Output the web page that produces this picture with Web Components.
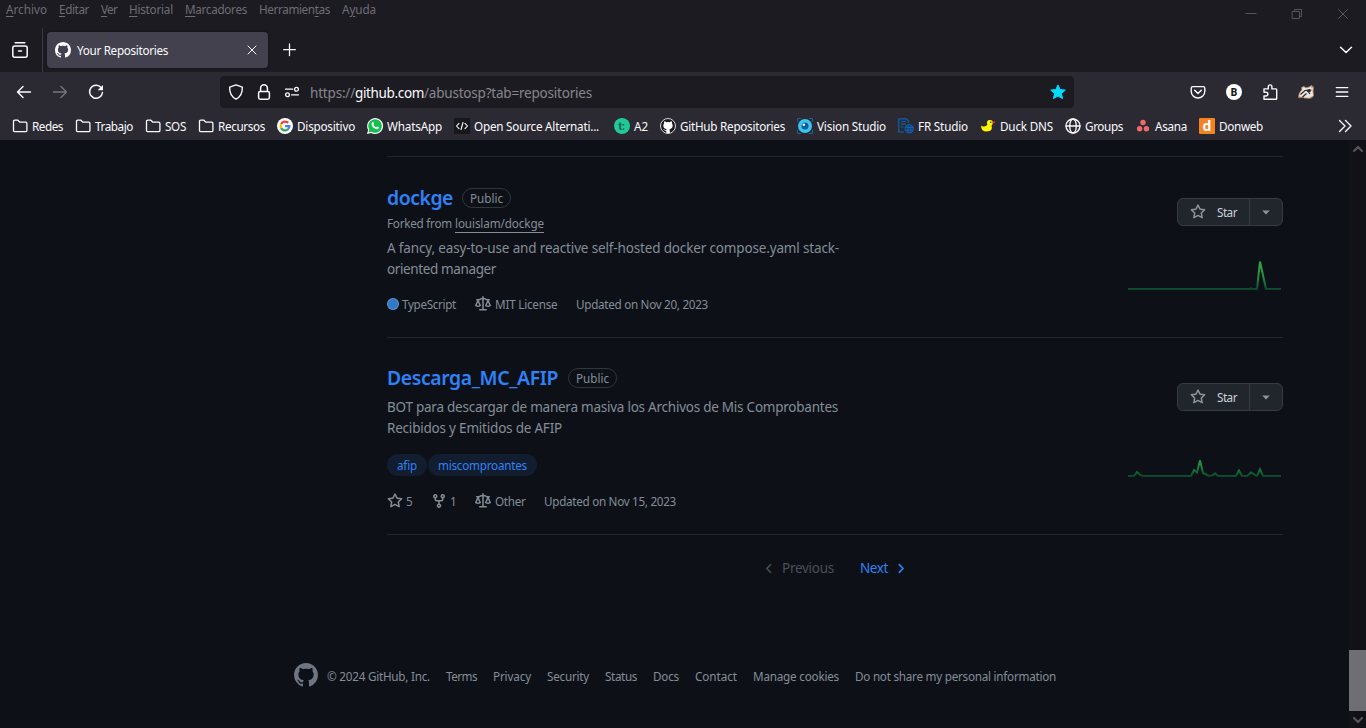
<!DOCTYPE html>
<html lang="es">
<head>
<meta charset="utf-8">
<title>Your Repositories</title>
<style>
html,body{margin:0;height:100%;overflow:hidden;background:#0d1117}
body{font-family:"Noto Sans","Open Sans",sans-serif;font-size:11.7px}
</style>
</head>
<body>
<browser-window></browser-window>
<script>
const ICONS={
 star:'<path fill="currentColor" d="M8 .25a.75.75 0 0 1 .673.418l1.882 3.815 4.21.612a.75.75 0 0 1 .416 1.279l-3.046 2.97.719 4.192a.751.751 0 0 1-1.088.791L8 12.347l-3.766 1.98a.75.75 0 0 1-1.088-.79l.72-4.194L.818 6.374a.75.75 0 0 1 .416-1.28l4.21-.611L7.327.668A.75.75 0 0 1 8 .25Zm0 2.445L6.615 5.5a.75.75 0 0 1-.564.41l-3.097.45 2.24 2.184a.75.75 0 0 1 .216.664l-.528 3.084 2.769-1.456a.75.75 0 0 1 .698 0l2.77 1.456-.53-3.084a.75.75 0 0 1 .216-.664l2.24-2.183-3.096-.45a.75.75 0 0 1-.564-.41L8 2.694Z"/>',
 law:'<path fill="currentColor" d="M8.75.75V2h.985c.304 0 .603.08.867.231l1.29.736c.038.022.08.033.124.033h2.234a.75.75 0 0 1 0 1.5h-.427l2.111 4.692a.75.75 0 0 1-.154.838l-.077.069c-.21.176-.441.327-.686.45C14.556 10.78 13.88 11 13 11a4.498 4.498 0 0 1-2.023-.454 3.544 3.544 0 0 1-.686-.45l-.071-.066a.75.75 0 0 1-.154-.838L12.178 4.5h-.162c-.305 0-.604-.079-.868-.231l-1.29-.736a.245.245 0 0 0-.124-.033H8.75V13h2.5a.75.75 0 0 1 0 1.5h-6.5a.75.75 0 0 1 0-1.5h2.5V3.5h-.984a.245.245 0 0 0-.124.033l-1.289.737c-.265.15-.564.23-.869.23h-.162l2.112 4.692a.75.75 0 0 1-.154.838l-.077.069c-.21.176-.441.327-.686.45C4.556 10.78 3.88 11 3 11a4.498 4.498 0 0 1-2.023-.454 3.544 3.544 0 0 1-.686-.45l-.071-.066a.75.75 0 0 1-.154-.838L2.178 4.5H1.75a.75.75 0 0 1 0-1.5h2.234a.249.249 0 0 0 .125-.033l1.288-.737c.265-.15.564-.23.869-.23h.984V.75a.75.75 0 0 1 1.5 0Zm2.945 8.477c.285.135.718.273 1.305.273s1.02-.138 1.305-.273L13 6.327Zm-10 0c.285.135.718.273 1.305.273s1.02-.138 1.305-.273L3 6.327Z"/>',
 fork:'<path fill="currentColor" d="M5 5.372v.878c0 .414.336.75.75.75h4.5a.75.75 0 0 0 .75-.75v-.878a2.25 2.25 0 1 1 1.5 0v.878a2.25 2.25 0 0 1-2.25 2.25h-1.5v2.128a2.251 2.251 0 1 1-1.5 0V8.5h-1.5A2.25 2.25 0 0 1 3.5 6.25v-.878a2.25 2.25 0 1 1 1.5 0ZM5 3.25a.75.75 0 1 0-1.5 0 .75.75 0 0 0 1.5 0Zm6.75.75a.75.75 0 1 0 0-1.5.75.75 0 0 0 0 1.5Zm-3 8.75a.75.75 0 1 0-1.5 0 .75.75 0 0 0 1.5 0Z"/>',
 mark:'<path fill="currentColor" d="M8 0c4.42 0 8 3.58 8 8a8.013 8.013 0 0 1-5.45 7.59c-.4.08-.55-.17-.55-.38 0-.27.01-1.13.01-2.2 0-.75-.25-1.23-.54-1.48 1.78-.2 3.65-.88 3.65-3.95 0-.88-.31-1.59-.82-2.15.08-.2.36-1.02-.08-2.12 0 0-.67-.22-2.2.82-.64-.18-1.32-.27-2-.27-.68 0-1.36.09-2 .27-1.53-1.03-2.2-.82-2.2-.82-.44 1.1-.16 1.92-.08 2.12-.51.56-.82 1.28-.82 2.15 0 3.06 1.86 3.75 3.64 3.95-.23.2-.44.55-.51 1.07-.46.21-1.61.55-2.33-.66-.15-.24-.6-.83-1.23-.82-.67.01-.27.38.01.53.34.19.73.9.82 1.13.16.45.68 1.31 2.69.94 0 .67.01 1.3.01 1.49 0 .21-.15.45-.55.38A7.995 7.995 0 0 1 0 8c0-4.42 3.58-8 8-8Z"/>',
 gh:'<circle cx="8" cy="8" r="7.500" fill="#1c1b22" stroke="#e8e8ea" stroke-width=".9"/><path fill="#fff" d="M6.300 15v-2.300c-2 .3-2.300-1-3-1.500 1.200-.3 1.500 1.200 3 .8l.3-.8C4.500 10.900 3.300 9.800 3.300 7.600c0-.9.3-1.600.8-2.100-.2-.9-.1-1.600.2-2.200.8 0 1.400.4 2 .9q1.700-.4 3.400 0c.6-.5 1.200-.9 2-.9.3.6.4 1.300.2 2.200.5.5.8 1.200.8 2.100 0 2.200-1.200 3.300-3.300 3.600.3.400.4.9.4 1.500V15z"/>',
 recent:'<g class="s"><path d="M3.200.8h9.600" stroke-width="1.500"/><path stroke-width="1.500" d="M.8 6q0-2 2-2h10.400q2 0 2 2v7.200q0 2-2 2H2.800q-2 0-2-2z"/><path d="M6.500 9h3" stroke-width="1.500"/></g>',
 close:'<path class="s" d="M4 4l8 8M12 4l-8 8"/>',
 plus:'<path class="s" stroke-width="1.300" d="M7.500 2v11.500M1.700 7.700h11.600"/>',
 down:'<path class="s" stroke-width="1.500" d="M2.500 5.200L8 10.500l5.500-5.300"/>',
 back:'<path class="s" stroke-width="1.400" d="M14.500 8H1.500M7 2.500L1.500 8 7 13.500"/>',
 fwd:'<path class="s" stroke-width="1.300" d="M1.500 8h13M9 2.500L14.500 8 9 13.500"/>',
 reload:'<path class="s" stroke-width="1.500" d="M13.600 4.400A6.500 6.500 0 1 0 14.500 8.500"/><path fill="currentColor" d="M15 1v5.200H9.600z"/>',
 shield:'<path class="s" stroke-width="1.400" d="M8 .9 14.300 3.100C14.600 8.500 13 12.500 8 15.200 3 12.500 1.400 8.500 1.700 3.100Z"/>',
 lock:'<rect class="s" stroke-width="1.500" x="2.600" y="7.400" width="10.800" height="7.800" rx="1.600"/><path class="s" stroke-width="1.500" d="M4.600 7.200V4.200a3.400 3.400 0 0 1 6.800 0v3"/>',
 perm:'<g class="s" stroke-width="1.300"><path d="M1.500 5.200h7.200M7.500 10.800h7"/><circle cx="12.500" cy="5.200" r="1.900"/><circle cx="3.500" cy="10.800" r="1.900"/></g>',
 fav:'<path fill="#00ddff" stroke="#00ddff" stroke-linejoin="round" d="M8 .9l2.100 4.700 5.200.5-3.900 3.400 1.200 5.100L8 12l-4.600 2.600 1.200-5.100L.7 6.100l5.200-.5z"/>',
 pocket:'<path class="s" stroke-width="1.400" d="M2.800 2.600h10.400q1.600 0 1.600 1.600v3a6.800 6.800 0 0 1-13.600 0v-3q0-1.600 1.600-1.600z"/><path class="s" stroke-width="1.500" d="M4.700 6.300 8 9.500l3.300-3.200"/>',
 b:'<circle cx="8" cy="8" r="8" fill="#fff"/><text x="8" y="11.700" font-size="10" font-weight="900" text-anchor="middle" font-family="Roboto,sans-serif" fill="#1c1b22">B</text>',
 puzzle:'<path class="s" stroke-width="1.400" d="M2 15.300V12h2a1.900 1.900 0 0 0 0-3.800H2V4.900h4.300V2.700a1.800 1.800 0 0 1 3.600 0v2.200h4q.8 0 .8.8v8.800q0 .8-.8.8z"/>',
 cat:'<path fill="#e9e5e0" stroke="#b98562" stroke-width=".8" d="M.6 13.500 1.200 9.500 4 5.500l-.5-2L6 2.500l1.500 1.200L11.500 3l1.500-1.500 2.500 1.500-.5 4 .5 5-3.500 2.300-5.500-.3-1.500-.8z"/><path stroke="#29272b" stroke-width="1.200" fill="none" d="M2.500 10.500l4.500-4 6.500-.5M4.500 13l4-3.500M10.500 8l1.500 2"/><path fill="#29272b" d="M8 6l4-1 1 2.500-3 1z"/><path fill="#c87a4a" d="M.5 12.500l3 .5-2.500 1.500zM13 1.500l2.500 2-2 .5zM12 13l3.500-.5-2 1.800z"/>',
 menu:'<path class="s" stroke-width="1.300" d="M2.300 3.600h11.500M2.300 8h11.500M2.300 12.400h11.500"/>',
 folder:'<path class="s" stroke-width="1.300" d="M1.500 12.400V3.400q0-1.200 1.200-1.200h3.200l2 2h5.800q1.200 0 1.200 1.200v7q0 1.200-1.200 1.200H2.700q-1.200 0-1.200-1.200z"/>',
 google:'<circle cx="8" cy="8" r="8" fill="#fff"/><g fill="none" stroke-width="2.300"><path stroke="#ea4335" d="M4.100 6A4.400 4.400 0 0 1 11.200 4.900"/><path stroke="#fbbc05" d="M4.100 10a4.400 4.400 0 0 1 0-4"/><path stroke="#34a853" d="M10.800 11.400A4.400 4.400 0 0 1 4.100 10"/><path stroke="#4285f4" d="M8 8.100h4.400a4.400 4.400 0 0 1-1.600 3.300"/></g>',
 wa:'<path fill="#fff" d="M0 16l1.100-4.100A8 8 0 1 1 4.100 15z"/><path fill="#12c04b" d="M1.500 14.500l.8-2.800A6.800 6.800 0 1 1 4.400 13.800z"/><path fill="#fff" d="M5.200 4.200c.5-.5 1-.4 1.200 0l.7 1.500c.1.400-.7 1-.6 1.200.5 1 1.400 1.800 2.500 2.300.4 0 .8-.9 1.100-.8l1.600.8c.3.500-.1 1.400-.8 1.800-1.400.8-3.600-.4-4.800-1.700C4.600 7.900 4 5.500 5.200 4.200z"/>',
 code:'<path fill="#17181a" d="M0 0h16v16H0z"/><path class="s" stroke-width="1.100" d="M5 5.300L2.500 8 5 10.700M11 5.300 13.500 8 11 10.700M9 4.500 7 11.500"/>',
 a2:'<circle cx="8" cy="8" r="8" fill="#20c997"/><text x="7.700" y="11.500" font-size="10" font-weight="700" text-anchor="middle" font-family="Roboto,sans-serif" fill="#14584b">t:</text>',
 vision:'<path fill="none" stroke="#1e5e91" d="M.5 4V.5H4M12 .5h3.500V4M15.500 12v3.500H12M4 15.500H.5V12"/><circle cx="8" cy="8" r="7" fill="#38c5ef"/><circle cx="8" cy="8" r="3.500" fill="#0c5c9a"/><circle cx="6.800" cy="6.700" r="1.300" fill="#e7fbff"/>',
 fr:'<path fill="none" stroke="#0c60ad" stroke-width="1.200" d="M6 14H.8V.8h7.500l2 2V5M3 3.500h5M3 6.200h5M3 9h2.500"/><circle cx="11.300" cy="10.800" r="4.200" fill="#18375d" stroke="#0c64b8"/><path stroke="#1269c4" stroke-width=".8" fill="none" d="M7.500 9.500h7.500M7.500 12h7.500M10 7v8M12.800 7v8"/>',
 duck:'<path fill="#fff500" d="M1 7.200q.6 1.600 3 1.300 2.500-.2 3.300-1.700Q6 2 9.800 2q3.300 0 3 3-.2 1.700-1.300 2.700 2 5.600-5 5.800Q1 13.500 1 7.200z"/><circle cx="10.800" cy="4.200" r=".7" fill="#222"/><path fill="#e33" d="M12.500 3.800l2.700-.3-.5 1.500-2.200.6z"/>',
 globe:'<g class="s" stroke-width="1.300"><circle cx="8" cy="8" r="7"/><ellipse cx="8" cy="8" rx="3.300" ry="7"/><path d="M1 8h14"/></g>',
 asana:'<g fill="#f06a6a"><circle cx="8" cy="4.500" r="2.700"/><circle cx="4.600" cy="10.700" r="2.700"/><circle cx="11.400" cy="10.700" r="2.700"/></g>',
 don:'<rect width="16" height="16" rx="1" fill="#f58220"/><text x="7.900" y="13" font-size="14" font-weight="700" text-anchor="middle" font-family="Noto Sans,sans-serif" fill="#fff">d</text>',
 more:'<path class="s" stroke-width="1.400" d="M2.500 2.500 8 8l-5.500 5.500M8.500 2.500 14 8l-5.500 5.500"/>',
 min:'<path class="s" d="M3 7.500h10"/>',
 max:'<path class="s" stroke-linejoin="miter" d="M3.500 5.500h7v7h-7zM5.500 5.500v-2h7v7h-2"/>',
 wclose:'<path class="s" d="M3.500 3.500l9 9M12.500 3.500l-9 9"/>',
 caret:'<path fill="currentColor" d="M4.200 6.500h7.600L8 10.500z"/>',
 left:'<path class="s" stroke-width="1.600" d="M9.500 4.700 5.700 8.500l3.800 3.800"/>',
 right:'<path class="s" stroke-width="1.700" d="M6.300 4.700 10.100 8.500l-3.800 3.800"/>',
 sup:'<path class="s" stroke-width="2.200" stroke-linecap="butt" d="M4 10l4-4 4 4"/>',
 sdown:'<path class="s" stroke-width="2.200" stroke-linecap="butt" d="M4 6l4 4 4-4"/>'
};
const component=(name,html,setup)=>customElements.define(name,class extends HTMLElement{
  connectedCallback(){
    if(this.shadowRoot)return;
    const root=this.attachShadow({mode:'open'});
    root.innerHTML=typeof html==='function'?html(this):html;
    if(setup)setup(this,root);
  }
});

/* One line of text whose tracking is adjusted to fill the width in "w". */
component('fit-text',`<style>:host{display:block;flex:none;white-space:nowrap;width:var(--w)}span{letter-spacing:var(--track,0)}::slotted(u){text-decoration:underline;text-underline-offset:1.5px;text-decoration-thickness:1px}</style><span><slot></slot></span>`,(el,root)=>{
  const w=+el.getAttribute('w');
  const natural=root.querySelector('span').getBoundingClientRect().width;
  el.style.setProperty('--track',((w-natural)/el.textContent.length).toFixed(4)+'px');
  el.style.setProperty('--w',w+'px');
});
component('x-icon',el=>{
  const s=el.getAttribute('size')||16;
  return `<style>:host{display:block;flex:none;width:${s}px;height:${s}px}svg{display:block;overflow:visible}.s{fill:none;stroke:currentColor;stroke-linecap:round;stroke-linejoin:round}</style><svg width="${s}" height="${s}" viewBox="0 0 16 16">${ICONS[el.getAttribute('name')]}</svg>`;
});
component('menu-bar',`<style>
:host{display:flex;height:28px;color:#6e6d74;justify-content:space-between;padding:0 15px 0 6px}
nav{display:flex;gap:12px;line-height:19px}.win{display:flex;gap:30px;padding-top:6px;color:#55545b}
</style><nav><fit-text w="41"><u>A</u>rchivo</fit-text><fit-text w="30"><u>E</u>ditar</fit-text><fit-text w="16"><u>V</u>er</fit-text><fit-text w="44"><u>H</u>istorial</fit-text><fit-text w="62"><u>M</u>arcadores</fit-text><fit-text w="71">Herramien<u>t</u>as</fit-text><fit-text w="34">A<u>y</u>uda</fit-text></nav>
<div class="win"><x-icon name="min"></x-icon><x-icon name="max"></x-icon><x-icon name="wclose"></x-icon></div>`);
component('tab-strip',`<style>
:host{display:flex;height:44px;align-items:center;color:#fbfbfe}
.recent{width:42px;height:44px;border-right:1px solid #3a3944;display:flex;align-items:center;justify-content:center;box-sizing:content-box}
.recent x-icon{margin-right:2px}
.tab{box-sizing:border-box;width:221px;height:36px;margin-left:4px;padding:0 8px;background:#42414d;border-radius:4px;box-shadow:0 0 3px rgba(0,0,0,.5);display:flex;align-items:center;line-height:36px}
.tab fit-text{margin:0 auto 0 6px}.plus{margin-left:14px}.all{margin:0 12px 0 auto}
</style><div class="recent"><x-icon name="recent"></x-icon></div>
<div class="tab"><x-icon name="mark"></x-icon><fit-text w="91">Your Repositories</fit-text><x-icon name="close"></x-icon></div>
<x-icon class="plus" name="plus"></x-icon><x-icon class="all" name="down"></x-icon>`);
component('nav-bar',`<style>
:host{display:flex;height:40px;align-items:center;color:#fbfbfe;padding:0 16px;box-sizing:border-box}
.hist{display:flex;gap:20px;width:204px}.off{color:#77767e}
.url{width:854px;height:32px;background:#1c1b22;border-radius:4px;display:flex;align-items:center;box-sizing:border-box;padding:0 8px;line-height:32px}
.url fit-text{font-size:13.500px;margin-top:2px}
.sec{display:flex;gap:12px;margin-right:10px}.g{color:#87868c}.url>x-icon{margin-left:auto}
.tools{display:flex;gap:20px;margin-left:auto}
</style><div class="hist"><x-icon name="back"></x-icon><x-icon class="off" name="fwd"></x-icon><x-icon name="reload"></x-icon></div>
<div class="url"><div class="sec"><x-icon name="shield"></x-icon><x-icon name="lock"></x-icon><x-icon name="perm"></x-icon></div><fit-text class="g" w="45">https://</fit-text><fit-text w="69">github.com</fit-text><fit-text class="g" w="168">/abustosp?tab=repositories</fit-text><x-icon name="fav"></x-icon></div>
<div class="tools"><x-icon name="pocket"></x-icon><x-icon name="b"></x-icon><x-icon name="puzzle"></x-icon><x-icon name="cat"></x-icon><x-icon name="menu"></x-icon></div>`);
component('book-mark',el=>`<style>:host{display:flex;align-items:center;gap:4px}fit-text{line-height:28px}</style><x-icon name="${el.getAttribute('icon')}"></x-icon><fit-text w="${el.getAttribute('w')}">${el.getAttribute('label')}</fit-text>`);
const MARKS=[['folder',31,'Redes'],['folder',38,'Trabajo'],['folder',21,'SOS'],['folder',47,'Recursos'],['google',58,'Dispositivo'],['wa',55,'WhatsApp'],['code',128,'Open Source Alternati...',125],['a2',14,'A2'],['gh',105,'GitHub Repositories'],['vision',69,'Vision Studio'],['fr',50,'FR Studio'],['duck',53,'Duck DNS'],['globe',38,'Groups'],['asana',32,'Asana'],['don',44,'Donweb']];
component('bookmarks-bar',()=>`<style>
:host{display:flex;height:28px;align-items:center;color:#fbfbfe;padding:0 13px 0 12px;gap:12px}
x-icon{margin-left:auto}.wide{margin-right:3px}
</style>${MARKS.map(([i,w,t,r])=>`<book-mark ${r?'class="wide"':''} icon="${i}" w="${r||w}" label="${t}"></book-mark>`).join('')}<x-icon name="more"></x-icon>`);
component('star-button',`<style>
:host{display:flex;box-sizing:border-box;width:106px;height:28px;border:1px solid #363b42;border-radius:6px;background:#21262d;color:#c9d1d9;line-height:27px}
.main{display:flex;align-items:center;width:71px;border-right:1px solid #363b42;box-sizing:content-box;padding-left:0}
.main x-icon{margin:0 11px 0 12px;color:#8b949e}.drop{flex:1;display:grid;place-items:center;color:#8b949e}
</style><div class="main"><x-icon name="star"></x-icon><fit-text w="20">Star</fit-text></div><div class="drop"><x-icon name="caret"></x-icon></div>`);
component('spark-line',el=>`<style>:host{display:block;width:155px;height:30px}svg{display:block}</style><svg width="155" height="30"><defs><linearGradient id="g" gradientUnits="userSpaceOnUse" x1="0" y1="29" x2="0" y2="8"><stop offset="0" stop-color="#0e4429"/><stop offset=".1" stop-color="#0c5730"/><stop offset=".5" stop-color="#208640"/><stop offset="1" stop-color="#2ea043"/></linearGradient></defs><polyline fill="none" stroke="url(#g)" stroke-width="2" transform="translate(0 .5)" points="${el.getAttribute('points')}"/></svg>`);
component('visibility-label',`<style>:host{box-sizing:border-box;display:block;width:49px;height:20px;border:1px solid #30363d;border-radius:10px;color:#848d97;line-height:19px;padding-left:7px;font-size:11.700px}</style><fit-text w="33">Public</fit-text>`);
component('repo-row',`<style>
:host{display:flex;justify-content:space-between;box-sizing:border-box;border-bottom:1px solid #21262d;color:#848d97;width:896px}
.side{width:155px;display:flex;flex-direction:column;align-items:flex-end}
</style><div><slot></slot></div><div class="side"><slot name="side"></slot></div>`);
component('repo-list',`<style>
:host{display:block;margin-left:387px;width:896px}
.edge{height:16px;border-bottom:1px solid #21262d}
.t{display:flex;align-items:center;height:28px;line-height:28px;gap:9px}
.second .t{gap:10px}
.t fit-text{font-size:19.400px;font-weight:600;color:#2f81f7}
.first{height:181px}.second{height:197px}
.first .t{margin-top:27px}.second .t{margin-top:26px}
.fk{display:flex;height:22px;line-height:21px;gap:3px;margin-top:1px}
.fk .l{border-bottom:1px solid #848d97;margin-top:1px;line-height:19px;height:18px}
.d{font-size:13.500px;line-height:21px}
.first .d{margin-top:3px}.second .d{margin-top:5px}
.m{display:flex;align-items:center;height:20px;line-height:21px}
.first .m{margin-top:14px}.dot{width:12px;height:12px;border-radius:50%;background:#3178c6;margin-right:3px;box-shadow:inset 0 0 0 1px rgba(255,255,255,.2)}
.law{margin:-1px 4px 0 19px}.up{margin-left:18.500px}
.topics{display:flex;gap:1px;margin-top:15px;color:#2f81f7;line-height:23.500px}
.topics span{height:22px;border-radius:11px;background:#121d2f;padding:0 10px}
.second .m{margin-top:15px}.st{margin:-1px 3px 0 0}.fkk{margin:-1px 3px 0 19px}
.first star-button{margin-top:41px}.second star-button{margin-top:45px}
.first spark-line{margin-top:34px}.second spark-line{margin-top:36px}
</style><div class="edge"></div>
<repo-row class="first"><div class="t"><fit-text w="66">dockge</fit-text><visibility-label></visibility-label></div>
<div class="fk"><fit-text w="65">Forked from</fit-text><fit-text class="l" w="89">louislam/dockge</fit-text></div>
<div class="d"><fit-text w="452">A fancy, easy-to-use and reactive self-hosted docker compose.yaml stack-</fit-text><fit-text w="109">oriented manager</fit-text></div>
<div class="m"><i class="dot"></i><fit-text w="54">TypeScript</fit-text><x-icon class="law" name="law"></x-icon><fit-text w="62.500">MIT License</fit-text><fit-text class="up" w="132">Updated on Nov 20, 2023</fit-text></div>
<star-button slot="side"></star-button><spark-line slot="side" points="0,28.500 121,28.500 123,28 125,28.500 129,28.500 132,1 138,28.500 153,28.500"></spark-line></repo-row>
<repo-row class="second"><div class="t"><fit-text w="171">Descarga_MC_AFIP</fit-text><visibility-label></visibility-label></div>
<div class="d"><fit-text w="451">BOT para descargar de manera masiva los Archivos de Mis Comprobantes</fit-text><fit-text w="175">Recibidos y Emitidos de AFIP</fit-text></div>
<div class="topics"><span><fit-text w="20">afip</fit-text></span><span><fit-text w="89">miscomproantes</fit-text></span></div>
<div class="m"><x-icon class="st" name="star"></x-icon><fit-text w="6">5</fit-text><x-icon class="fkk" name="fork"></x-icon><fit-text w="6">1</fit-text><x-icon class="law" name="law"></x-icon><fit-text w="30.500">Other</fit-text><fit-text class="up" w="132">Updated on Nov 15, 2023</fit-text></div>
<star-button slot="side"></star-button><spark-line slot="side" points="0,28.500 6,28.500 9,24.500 12,27.500 15,28.500 63,28.500 66,22.500 69,25 72,13 75,25.500 81,28.500 84,28 87,26 90,28.500 108,28.500 111,23 114,28.500 119,28.500 123,25 129,28.500 132,22 135,28.500 153,28.500"></spark-line></repo-row>`);
component('page-nav',`<style>
:host{display:flex;align-items:center;height:26px;line-height:26px;margin:20px 0 0 761px;font-size:13.500px;color:#484f58}
.p{margin-left:5px}.n{margin-left:26px;color:#2f81f7}.r{margin-left:5px;color:#2f81f7}
</style><x-icon name="left"></x-icon><fit-text class="p" w="52">Previous</fit-text><fit-text class="n" w="28">Next</fit-text><x-icon class="r" name="right"></x-icon>`);
component('site-footer',`<style>
:host{display:flex;gap:16px;align-items:center;margin:82px 0 0 294px;height:24px;line-height:24px;color:#848d97}
fit-text{margin-top:2px}
x-icon{color:#6e7681;margin-right:-7px}
</style><x-icon name="mark" size="24"></x-icon><fit-text w="103">© 2024 GitHub, Inc.</fit-text><fit-text w="31">Terms</fit-text><fit-text w="38">Privacy</fit-text><fit-text w="42">Security</fit-text><fit-text w="32">Status</fit-text><fit-text w="26">Docs</fit-text><fit-text w="42">Contact</fit-text><fit-text w="86">Manage cookies</fit-text><fit-text w="201">Do not share my personal information</fit-text>`);
component('scroll-bar',`<style>
:host{display:flex;flex-direction:column;align-items:center;width:17px;background:#101217;color:#55565b}
.thumb{width:17px;height:61px;background:#6e6f74;margin:auto 0 1px}
x-icon:first-of-type{margin-top:1px}
</style><x-icon name="sup"></x-icon><div class="thumb"></div><x-icon name="sdown"></x-icon>`);
component('browser-window',`<style>
:host{display:flex;flex-direction:column;width:1366px;height:728px;overflow:hidden}
.top{background:#1c1b22;height:72px}.bars{background:#2b2a33;height:68px}
.view{display:flex;flex:1;background:#0d1117;min-height:0}.page{flex:1}
</style><div class="top"><menu-bar></menu-bar><tab-strip></tab-strip></div>
<div class="bars"><nav-bar></nav-bar><bookmarks-bar></bookmarks-bar></div>
<div class="view"><div class="page"><repo-list></repo-list><page-nav></page-nav><site-footer></site-footer></div><scroll-bar></scroll-bar></div>`);
</script>
</body>
</html>
